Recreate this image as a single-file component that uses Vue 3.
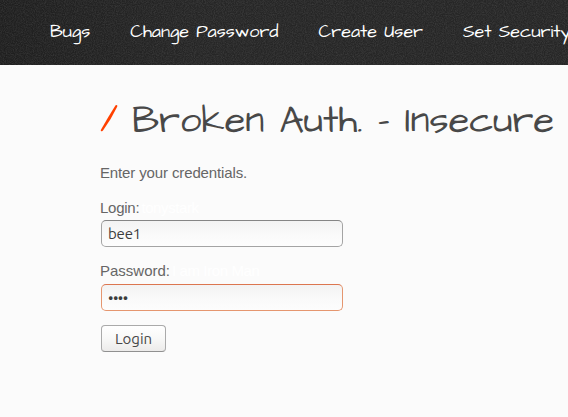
<script setup>
import { ref } from 'vue'

const login = ref('bee1')
const password = ref('pass')

const links = ['Bugs', 'Change Password', 'Create User', 'Set Security']
</script>

<template>
  <div class="page">
    <header class="bar">
      <svg class="grain" width="568" height="65" aria-hidden="true">
        <filter id="grain" x="0" y="0" width="100%" height="100%" color-interpolation-filters="sRGB">
          <feTurbulence type="fractalNoise" baseFrequency="0.9" numOctaves="2" seed="4" />
          <feColorMatrix values="0 0 0 0 1  0 0 0 0 1  0 0 0 0 1  .18 0 0 0 -.06" />
        </filter>
        <rect width="568" height="65" filter="url(#grain)" />
      </svg>
      <nav class="nav">
        <a v-for="link in links" :key="link" class="link">{{ link }}</a>
      </nav>
    </header>
    <main class="content">
      <h1 class="title">
        <svg class="slash" width="18" height="30" viewBox="0 0 18 30">
          <path d="M15.6 1.2 Q17.9 .4 17.2 2.8 Q11.4 15 3 26.4 Q.6 28.4 .8 25.9 Q8 13 15.6 1.2Z" fill="#ff4000" />
        </svg>
        <span>Broken Auth. - Insecure</span>
      </h1>
      <p class="intro">Enter your credentials.</p>
      <form @submit.prevent>
        <div class="field">
          <label for="login" class="tight">Login:<span class="hint">tonystark</span></label>
          <input id="login" v-model="login" type="text" />
        </div>
        <div class="field">
          <label for="password">Password:<span class="hint">I am Iron Man</span></label>
          <input id="password" v-model="password" class="active" type="password" />
        </div>
        <button type="submit">Login</button>
      </form>
    </main>
  </div>
</template>

<style>
body { margin: 0; overflow: hidden; }
</style>

<style scoped>
.page {
  width: 568px;
  height: 417px;
  overflow: hidden;
  background: #fbfbfb;
  color: #666;
  font: 15px/18px "Liberation Sans", Arial, sans-serif;
}
.bar {
  position: relative;
  height: 65px;
  box-sizing: border-box;
  padding: 19px 0 0 50px;
  overflow: hidden;
  background: linear-gradient(90deg, #1f1f1f, #262626 35%);
}
.grain { position: absolute; inset: 0; }
.nav { position: relative; display: flex; gap: 40px; }
.link {
  flex: none;
  color: #fff;
  font: 18px/26px "Architects Daughter", Lato, sans-serif;
  letter-spacing: -0.015px;
  white-space: nowrap;
}
.content { padding: 36px 0 0 100px; }
.title {
  display: flex;
  height: 39px;
  margin: 0;
  color: #484848;
  font: 400 38px/41px "Architects Daughter", Lato, sans-serif;
  white-space: nowrap;
}
.slash { margin: 3px 14px 0 0; flex: none; }
.intro { margin: 24px 0 17px; letter-spacing: -0.13px; }
.field { margin-bottom: 14px; }
label { display: block; height: 21px; }
.field + .field label { height: 22px; }
.tight { letter-spacing: -0.25px; }
.hint { margin-left: 2px; color: #fff; letter-spacing: -0.4px; }
input {
  display: block;
  box-sizing: border-box;
  width: 242px;
  height: 27px;
  margin-left: 1px;
  padding: 0 6px;
  border: 1px solid #a4a4a4;
  border-top-color: #858585;
  border-radius: 5px;
  outline: none;
  background: linear-gradient(#f3f3f3, #fafafa 60%, #fdfdfd);
  color: #3c3c3c;
  font: 15px "Ubuntu", "Noto Sans", sans-serif;
  letter-spacing: -0.2px;
}
.field + .field { margin-top: 15px; }
input.active { border-color: #e5966f; border-top-color: #dc7650; letter-spacing: -0.5px; }
button {
  display: block;
  width: 65px;
  height: 27px;
  margin-left: 1px;
  padding: 0;
  border: 1px solid #aaa;
  border-bottom-color: #909090;
  border-radius: 4px;
  background: linear-gradient(#fff, #f8f8f7 50%, #ecebea);
  color: #484848;
  font: 15px "Ubuntu", "Noto Sans", sans-serif;
}
</style>
